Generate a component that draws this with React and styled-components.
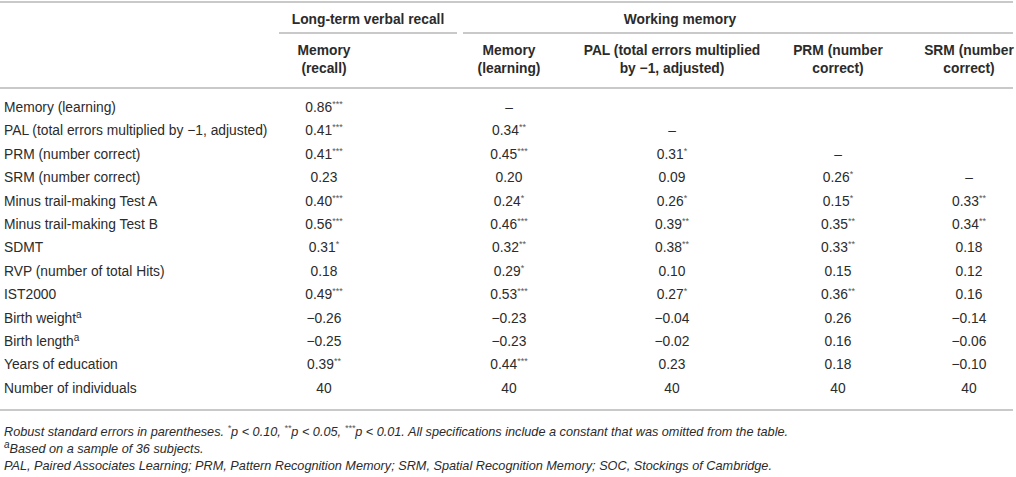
import styled, { createGlobalStyle } from 'styled-components';

const GlobalStyle = createGlobalStyle`
  body{
    margin:0;
    background:#fff;
  }
`

const Wrapper = styled.div`
width:1013px;
font-family:"Liberation Sans", Arial, sans-serif;
font-size:13.8px;
color:#2b2b2b;
`

const TableBox = styled.div`
border-top:2px solid #c9c9c9;
border-bottom:2px solid #c9c9c9;
margin-top:1px;
`

const GroupRow = styled.div`
display:flex;
height:31px;
padding-left:279px;
`

const GroupCell = styled.div`
width:${p => p.$w}px;
margin-left:${p => p.$gap || 0}px;
padding-right:${p => p.$pr || 0}px;
padding-top:8px;
box-sizing:border-box;
line-height:18px;
font-weight:bold;
text-align:center;
border-bottom:2px solid #c9c9c9;
`

const Grid = styled.div`
display:grid;
grid-template-columns:223px 202px 168px 158px 174px 88px;
`

const HeadRow = styled(Grid)`
padding:8px 0 9px;
border-bottom:2px solid #c9c9c9;
`

const HeadCell = styled.div`
display:flex;
flex-direction:column;
align-items:center;
font-weight:bold;
line-height:18px;
white-space:nowrap;
`

const Body = styled.div`
padding:7px 0 9px;
`

const Row = styled(Grid)`
height:23.4px;
line-height:23.4px;
`

const Label = styled.div`
padding-left:4px;
white-space:nowrap;
`

const Cell = styled.div`
text-align:center;
white-space:nowrap;
`

const Star = styled.sup`
font-size:9px;
line-height:0;
vertical-align:5px;
color:#555;
`

const Note = styled.sup`
font-size:10px;
line-height:0;
vertical-align:5px;
`

const Foot = styled.div`
margin-top:13px;
padding-left:4px;
font-size:12.7px;
font-style:italic;
line-height:17px;
`

const heads = [
  ['Memory', '(recall)'],
  ['Memory', '(learning)'],
  ['PAL (total errors multiplied', 'by \u22121, adjusted)'],
  ['PRM (number', 'correct)'],
  ['SRM (number', 'correct)'],
]

const rows = [
  ['Memory (learning)', '0.86***', '\u2013'],
  ['PAL (total errors multiplied by \u22121, adjusted)', '0.41***', '0.34**', '\u2013'],
  ['PRM (number correct)', '0.41***', '0.45***', '0.31*', '\u2013'],
  ['SRM (number correct)', '0.23', '0.20', '0.09', '0.26*', '\u2013'],
  ['Minus trail-making Test A', '0.40***', '0.24*', '0.26*', '0.15*', '0.33**'],
  ['Minus trail-making Test B', '0.56***', '0.46***', '0.39**', '0.35**', '0.34**'],
  ['SDMT', '0.31*', '0.32**', '0.38**', '0.33**', '0.18'],
  ['RVP (number of total Hits)', '0.18', '0.29*', '0.10', '0.15', '0.12'],
  ['IST2000', '0.49***', '0.53***', '0.27*', '0.36**', '0.16'],
  ['Birth weight^a', '\u22120.26', '\u22120.23', '\u22120.04', '0.26', '\u22120.14'],
  ['Birth length^a', '\u22120.25', '\u22120.23', '\u22120.02', '0.16', '\u22120.06'],
  ['Years of education', '0.39**', '0.44***', '0.23', '0.18', '\u22120.10'],
  ['Number of individuals', '40', '40', '40', '40', '40'],
]

function Value({ v }){
  const m = v.match(/^([^*]*)(\**)$/);
  return (
    <Cell>
      {m[1]}
      {m[2] && <Star>{m[2]}</Star>}
    </Cell>
  )
}

function RowLabel({ text }){
  if(text.endsWith('^a')){
    return <Label>{text.slice(0, -2)}<Note>a</Note></Label>
  }
  return <Label>{text}</Label>
}

export default function App(){
  return (
    <Wrapper>
      <GlobalStyle/>
      <TableBox>
        <GroupRow>
          <GroupCell $w={178}>Long-term verbal recall</GroupCell>
          <GroupCell $w={550} $gap={6} $pr={116}>Working memory</GroupCell>
        </GroupRow>
        <HeadRow>
          <div></div>
          {heads.map((h, i) => (
            <HeadCell key={i}>
              <span>{h[0]}</span>
              <span>{h[1]}</span>
            </HeadCell>
          ))}
        </HeadRow>
        <Body>
          {rows.map((r, i) => (
            <Row key={i}>
              <RowLabel text={r[0]}/>
              {[1, 2, 3, 4, 5].map(c => r[c] ? <Value key={c} v={r[c]}/> : <Cell key={c}/>)}
            </Row>
          ))}
        </Body>
      </TableBox>
      <Foot>
        <div>Robust standard errors in parentheses. <Star>*</Star>p &lt; 0.10, <Star>**</Star>p &lt; 0.05, <Star>***</Star>p &lt; 0.01. All specifications include a constant that was omitted from the table.</div>
        <div><Note>a</Note>Based on a sample of 36 subjects.</div>
        <div>PAL, Paired Associates Learning; PRM, Pattern Recognition Memory; SRM, Spatial Recognition Memory; SOC, Stockings of Cambridge.</div>
      </Foot>
    </Wrapper>
  )
}
